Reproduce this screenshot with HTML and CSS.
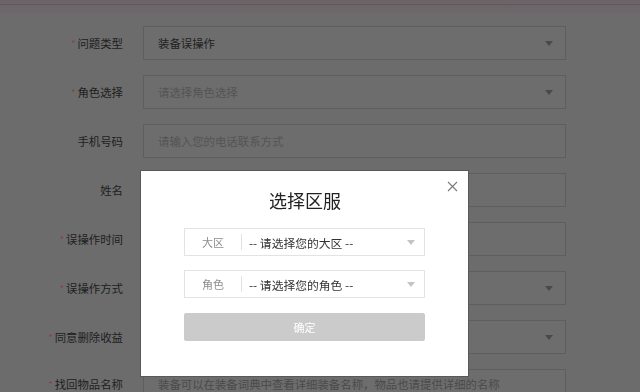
FILE: index.html
```html
<!DOCTYPE html>
<html lang="zh">
<head>
<meta charset="utf-8">
<title>选择区服</title>
<link rel="stylesheet" href="styles.css">
</head>
<body>
<div class="topbar"><div class="topline"></div></div>
<form class="form">
  <div class="row"><label class="lbl"><span class="req">*</span>问题类型</label><div class="field select"><span class="val">装备误操作</span><i class="caret"></i></div></div>
  <div class="row"><label class="lbl"><span class="req">*</span>角色选择</label><div class="field select"><span class="ph">请选择角色选择</span><i class="caret"></i></div></div>
  <div class="row"><label class="lbl">手机号码</label><div class="field"><span class="ph">请输入您的电话联系方式</span></div></div>
  <div class="row"><label class="lbl">姓名</label><div class="field"></div></div>
  <div class="row"><label class="lbl"><span class="req">*</span>误操作时间</label><div class="field"></div></div>
  <div class="row"><label class="lbl"><span class="req">*</span>误操作方式</label><div class="field select"><i class="caret"></i></div></div>
  <div class="row"><label class="lbl"><span class="req">*</span>同意删除收益</label><div class="field select"><i class="caret"></i></div></div>
  <div class="row last"><label class="lbl"><span class="req">*</span>找回物品名称</label><div class="field"><span class="ph2">装备可以在装备词典中查看详细装备名称，物品也请提供详细的名称</span></div></div>
</form>

<div class="modal">
  <button class="close" type="button" aria-label="关闭">
    <svg width="11" height="11" viewBox="0 0 11 11"><path d="M1 1L10 10M10 1L1 10" stroke="#7a7a7a" stroke-width="1.1" fill="none"/></svg>
  </button>
  <h2 class="title">选择区服</h2>
  <div class="msel"><span class="mlabel">大区</span><span class="mdiv"></span><span class="mval">-- 请选择您的大区 --</span><i class="mcaret"></i></div>
  <div class="msel"><span class="mlabel">角色</span><span class="mdiv"></span><span class="mval">-- 请选择您的角色 --</span><i class="mcaret"></i></div>
  <button class="ok" type="button">确定</button>
</div>
</body>
</html>
```

FILE: styles.css
```css
* { box-sizing: border-box; }
html, body { margin: 0; padding: 0; }
body {
  width: 640px;
  height: 392px;
  overflow: hidden;
  background: #6c6c6c;
  font-family: "Noto Sans CJK SC", "Noto Sans", sans-serif;
}
.topbar {
  height: 14px;
  background: linear-gradient(#6b6367, #6f686b);
  padding-top: 4px;
}
.topline { height: 1px; background: #5f5a5c; }

.form {
  display: flex;
  flex-direction: column;
  gap: 15px;
  padding-top: 12px;
}
.row {
  display: flex;
  align-items: center;
  height: 34px;
}
.row.last { align-items: flex-start; }
.row.last .lbl { padding-top: 9px; line-height: 12px; }
.row.last .field { align-items: flex-start; padding-top: 8px; line-height: 12px; }
.lbl {
  width: 123px;
  text-align: right;
  font-size: 11.4px;
  color: #1e1e1e;
  margin-right: 20px;
  white-space: nowrap;
}
.req {
  color: #86404f;
  font-size: 9px;
  margin-right: 2px;
  position: relative;
  top: -1px;
}
.field {
  width: 423px;
  height: 34px;
  border: 1px solid #5e5e5e;
  background: #6d6d6d;
  display: flex;
  align-items: center;
  padding: 0 14px;
  font-size: 11.4px;
  position: relative;
}
.val { color: #1e1e1e; }
.ph { color: #545454; }
.ph2 { color: #4a4a4a; }
.caret {
  position: absolute;
  right: 12px;
  top: 14px;
  width: 0;
  height: 0;
  border-left: 4px solid transparent;
  border-right: 4px solid transparent;
  border-top: 5px solid #4a4a4a;
}

.modal {
  position: fixed;
  left: 141px;
  top: 171px;
  width: 327px;
  height: 205px;
  background: #ffffff;
  box-shadow: 0 0 0 1px #595959;
  padding: 19px 42px 0 43px;
  display: flex;
  flex-direction: column;
}
.close {
  position: absolute;
  right: 10px;
  top: 10px;
  width: 11px;
  height: 11px;
  padding: 0;
  border: 0;
  background: none;
  display: block;
}
.close svg { display: block; }
.title {
  margin: 0 0 18px;
  text-align: center;
  font-size: 18px;
  line-height: 20px;
  font-weight: normal;
  color: #222;
}
.msel {
  width: 241px;
  height: 28px;
  border: 1px solid #e3e3e3;
  display: flex;
  align-items: center;
  margin-bottom: 14px;
  position: relative;
}
.mlabel {
  width: 56px;
  text-align: center;
  color: #8d8d8d;
  font-size: 11px;
}
.mdiv {
  width: 1px;
  height: 16px;
  background: #e2e2e2;
}
.mval {
  margin-left: 7px;
  color: #333;
  font-size: 11.8px;
}
.mcaret {
  position: absolute;
  right: 9px;
  top: 11px;
  width: 0;
  height: 0;
  border-left: 4px solid transparent;
  border-right: 4px solid transparent;
  border-top: 5px solid #c4c4c4;
}
.ok {
  width: 241px;
  height: 28px;
  margin-top: 1px;
  border: 0;
  border-radius: 2px;
  background: #cbcbcb;
  color: #ffffff;
  font-family: inherit;
  font-size: 11px;
  padding: 0;
}
```
